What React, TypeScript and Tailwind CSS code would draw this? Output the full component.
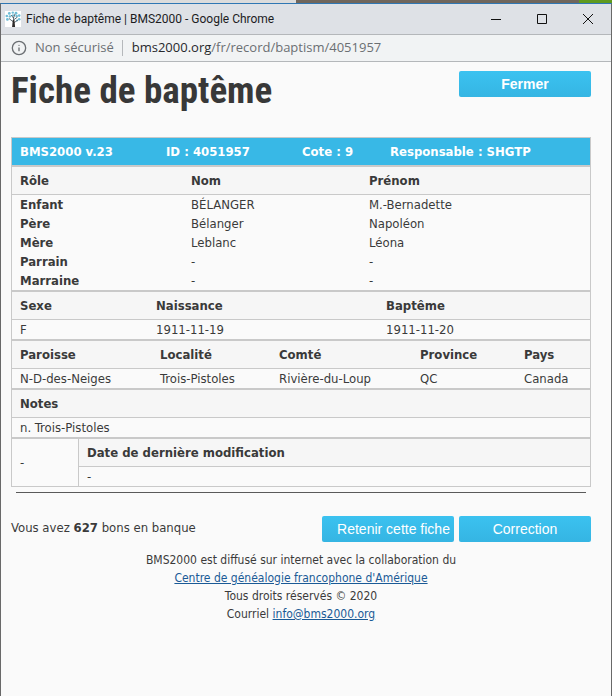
import { Info } from "lucide-react";

type RecordTableProps = {
  head: string[];
  rows: string[][];
  widths: string[];
  rowHeaders?: boolean;
};

const record = {
  version: "BMS2000 v.23",
  id: "ID : 4051957",
  cote: "Cote : 9",
  owner: "Responsable : SHGTP",
  people: [
    ["Enfant", "BÉLANGER", "M.-Bernadette"],
    ["Père", "Bélanger", "Napoléon"],
    ["Mère", "Leblanc", "Léona"],
    ["Parrain", "-", "-"],
    ["Marraine", "-", "-"],
  ],
};

function TreeIcon() {
  return (
    <svg viewBox="0 0 16 16" className="h-4 w-4 shrink-0" aria-hidden="true">
      <rect width="16" height="16" fill="#fff" />
      <g fill="#6fbdd6">
        <circle cx="1.8" cy="5" r="1.3" />
        <circle cx="4.3" cy="2.4" r="1.4" />
        <circle cx="4.8" cy="5.4" r="1.2" />
        <circle cx="7.8" cy="1.6" r="1.2" />
        <circle cx="8" cy="4.4" r="1.1" />
        <circle cx="11" cy="2.2" r="1.4" />
        <circle cx="11.6" cy="5" r="1.2" />
        <circle cx="14.2" cy="4.6" r="1.3" />
        <circle cx="14.2" cy="8.3" r="1.3" />
        <circle cx="2.4" cy="8.4" r="1.4" />
        <circle cx="12" cy="9.6" r="1" />
      </g>
      <path
        d="M8.5 16V6M8.5 11L4 7.5M8.5 9L12.5 6M8.5 12L13 9M8.5 7L6 4M8.5 7L10 3"
        stroke="#4f5f68"
        strokeWidth="0.9"
        fill="none"
      />
      <path d="M7.8 9h1.6l.7 7H7.1z" fill="#2e2a29" />
    </svg>
  );
}

const windowButtons = [
  { label: "Réduire", path: "M0 5.5H10" },
  { label: "Agrandir", path: "M.5 .5H9.5V9.5H.5Z" },
  { label: "Fermer la fenêtre", path: "M0 0L10 10M10 0L0 10" },
];

function WindowBar() {
  return (
    <header className="font-['Open_Sans','Noto_Sans',sans-serif]">
      <div className="flex h-[30px] items-center bg-[#dee1e6] pl-1 text-xs text-[#1c1c1e]">
        <TreeIcon />
        <span className="ml-[5px] flex-1 font-[Roboto,'Open_Sans',sans-serif] whitespace-nowrap">
          Fiche de baptême | BMS2000 - Google Chrome
        </span>
        {windowButtons.map((b) => (
          <button key={b.label} type="button" aria-label={b.label} className="flex w-[46px] justify-center">
            <svg viewBox="0 0 10 10" className="h-[10px] w-[10px]" fill="none" stroke="#111" strokeWidth="1">
              <path d={b.path} />
            </svg>
          </button>
        ))}
      </div>
      <div className="flex h-7 items-center border-y border-[#b4b7ba] bg-[#f1f3f4] pl-[10px] text-[13px] text-[#6b6f73]">
        <Info size={16} strokeWidth={2} />
        <span className="ml-2 whitespace-nowrap">Non sécurisé</span>
        <span className="mr-[9px] ml-2 h-4 w-px bg-[#b5b8bb]" />
        <span className="whitespace-nowrap">
          <span className="text-[#27292c]">bms2000.org</span>/fr/record/baptism/4051957
        </span>
      </div>
    </header>
  );
}

function RecordTable({ head, rows, widths, rowHeaders }: RecordTableProps) {
  return (
    <table className="w-full table-fixed border-separate border-spacing-0 border border-[#c9c9c9] text-left">
      <thead className="bg-[#f6f6f6]">
        <tr className="h-7">
          {head.map((h, i) => (
            <th key={h} scope="col" className={`${widths[i] ?? ""} border-b border-[#c9c9c9] px-2 py-0 font-bold`}>
              {h}
            </th>
          ))}
        </tr>
      </thead>
      <tbody>
        {rows.map((row, r) => (
          <tr key={r} className="h-[19px]">
            {row.map((cell, i) =>
              rowHeaders && i === 0 ? (
                <th key={i} scope="row" className="px-2 py-0 font-bold">{cell}</th>
              ) : (
                <td key={i} className="px-2 py-0">{cell}</td>
              )
            )}
          </tr>
        ))}
      </tbody>
    </table>
  );
}

const buttonClass =
  "h-[26px] w-[132px] rounded-xs bg-gradient-to-b from-[#3bc2f0] to-[#35b5e3] font-['Liberation_Sans',Arial,sans-serif] text-sm whitespace-nowrap text-white";

export default function App() {
  return (
    <div className="flex min-h-screen flex-col bg-[#fafafa]">
      {/* Desktop behind the window */}
      <div className="flex h-[3px]">
        <div className="w-[296px] bg-[#dcdcdc]" />
        <div className="flex-1 bg-[#70665c]" />
        <div className="w-[33px] bg-[#5f9a1e]" />
      </div>

      <div className="flex flex-1 flex-col border-x border-t border-x-[#696969] border-t-[#2f77b4]">
        <WindowBar />

        <main className="flex-1 pr-5 pl-[10px] font-['DejaVu_Sans_Condensed','Noto_Sans',sans-serif] text-[13px] leading-[18px] text-[#3a3a3a]">
          <div className="flex h-[75px] items-start justify-between pt-[9px]">
            <h1 className="font-['Roboto_Condensed','Liberation_Sans_Narrow','Liberation_Sans',sans-serif] text-[37px] leading-10 font-bold whitespace-nowrap text-[#383838]">
              Fiche de baptême
            </h1>
            <button type="button" className={`${buttonClass} font-bold`}>Fermer</button>
          </div>

          <table className="w-full table-fixed border-separate border-spacing-0 border border-[#c9c9c9] bg-[#38b8e6] text-left text-white">
            <tbody>
              <tr className="h-[27px]">
                <th className="w-[146px] px-2 py-0">{record.version}</th>
                <th className="w-[136px] px-2 py-0">{record.id}</th>
                <th className="w-[88px] px-2 py-0">{record.cote}</th>
                <th className="px-2 py-0">{record.owner}</th>
              </tr>
            </tbody>
          </table>

          <RecordTable
            head={["Rôle", "Nom", "Prénom"]}
            rows={record.people}
            widths={["w-[171px]", "w-[178px]"]}
            rowHeaders
          />
          <RecordTable
            head={["Sexe", "Naissance", "Baptême"]}
            rows={[["F", "1911-11-19", "1911-11-20"]]}
            widths={["w-[136px]", "w-[230px]"]}
          />
          <RecordTable
            head={["Paroisse", "Localité", "Comté", "Province", "Pays"]}
            rows={[["N-D-des-Neiges", "Trois-Pistoles", "Rivière-du-Loup", "QC", "Canada"]]}
            widths={["w-[140px]", "w-[119px]", "w-[141px]", "w-[104px]"]}
          />
          <RecordTable head={["Notes"]} rows={[["n. Trois-Pistoles"]]} widths={[]} />

          <table className="w-full table-fixed border-separate border-spacing-0 border border-[#c9c9c9] text-left">
            <tbody>
              <tr className="h-7">
                <td rowSpan={2} className="w-[67px] border-r border-[#c9c9c9] px-2 py-0">-</td>
                <th className="border-b border-[#c9c9c9] bg-[#f6f6f6] px-2 py-0">Date de dernière modification</th>
              </tr>
              <tr className="h-[19px]">
                <td className="px-2 py-0">-</td>
              </tr>
            </tbody>
          </table>

          <hr className="mx-[5px] mt-[5px] border-[#5a5a5a]" />

          <div className="mt-[23px] flex gap-[5px]">
            <p className="flex-1 pt-[3px]">
              Vous avez <strong>627</strong> bons en banque
            </p>
            <button type="button" className={`${buttonClass} pl-[11px]`}>Retenir cette fiche</button>
            <button type="button" className={buttonClass}>Correction</button>
          </div>

          <footer className="mt-[9px] text-center text-xs leading-[18px]">
            <p>BMS2000 est diffusé sur internet avec la collaboration du</p>
            <p>
              <a href="#centre" className="text-[#1a5a96] underline">Centre de généalogie francophone d'Amérique</a>
            </p>
            <p>Tous droits réservés © 2020</p>
            <p>
              Courriel <a href="mailto:info@bms2000.org" className="text-[#1a5a96] underline">info@bms2000.org</a>
            </p>
          </footer>
        </main>
      </div>
    </div>
  );
}
